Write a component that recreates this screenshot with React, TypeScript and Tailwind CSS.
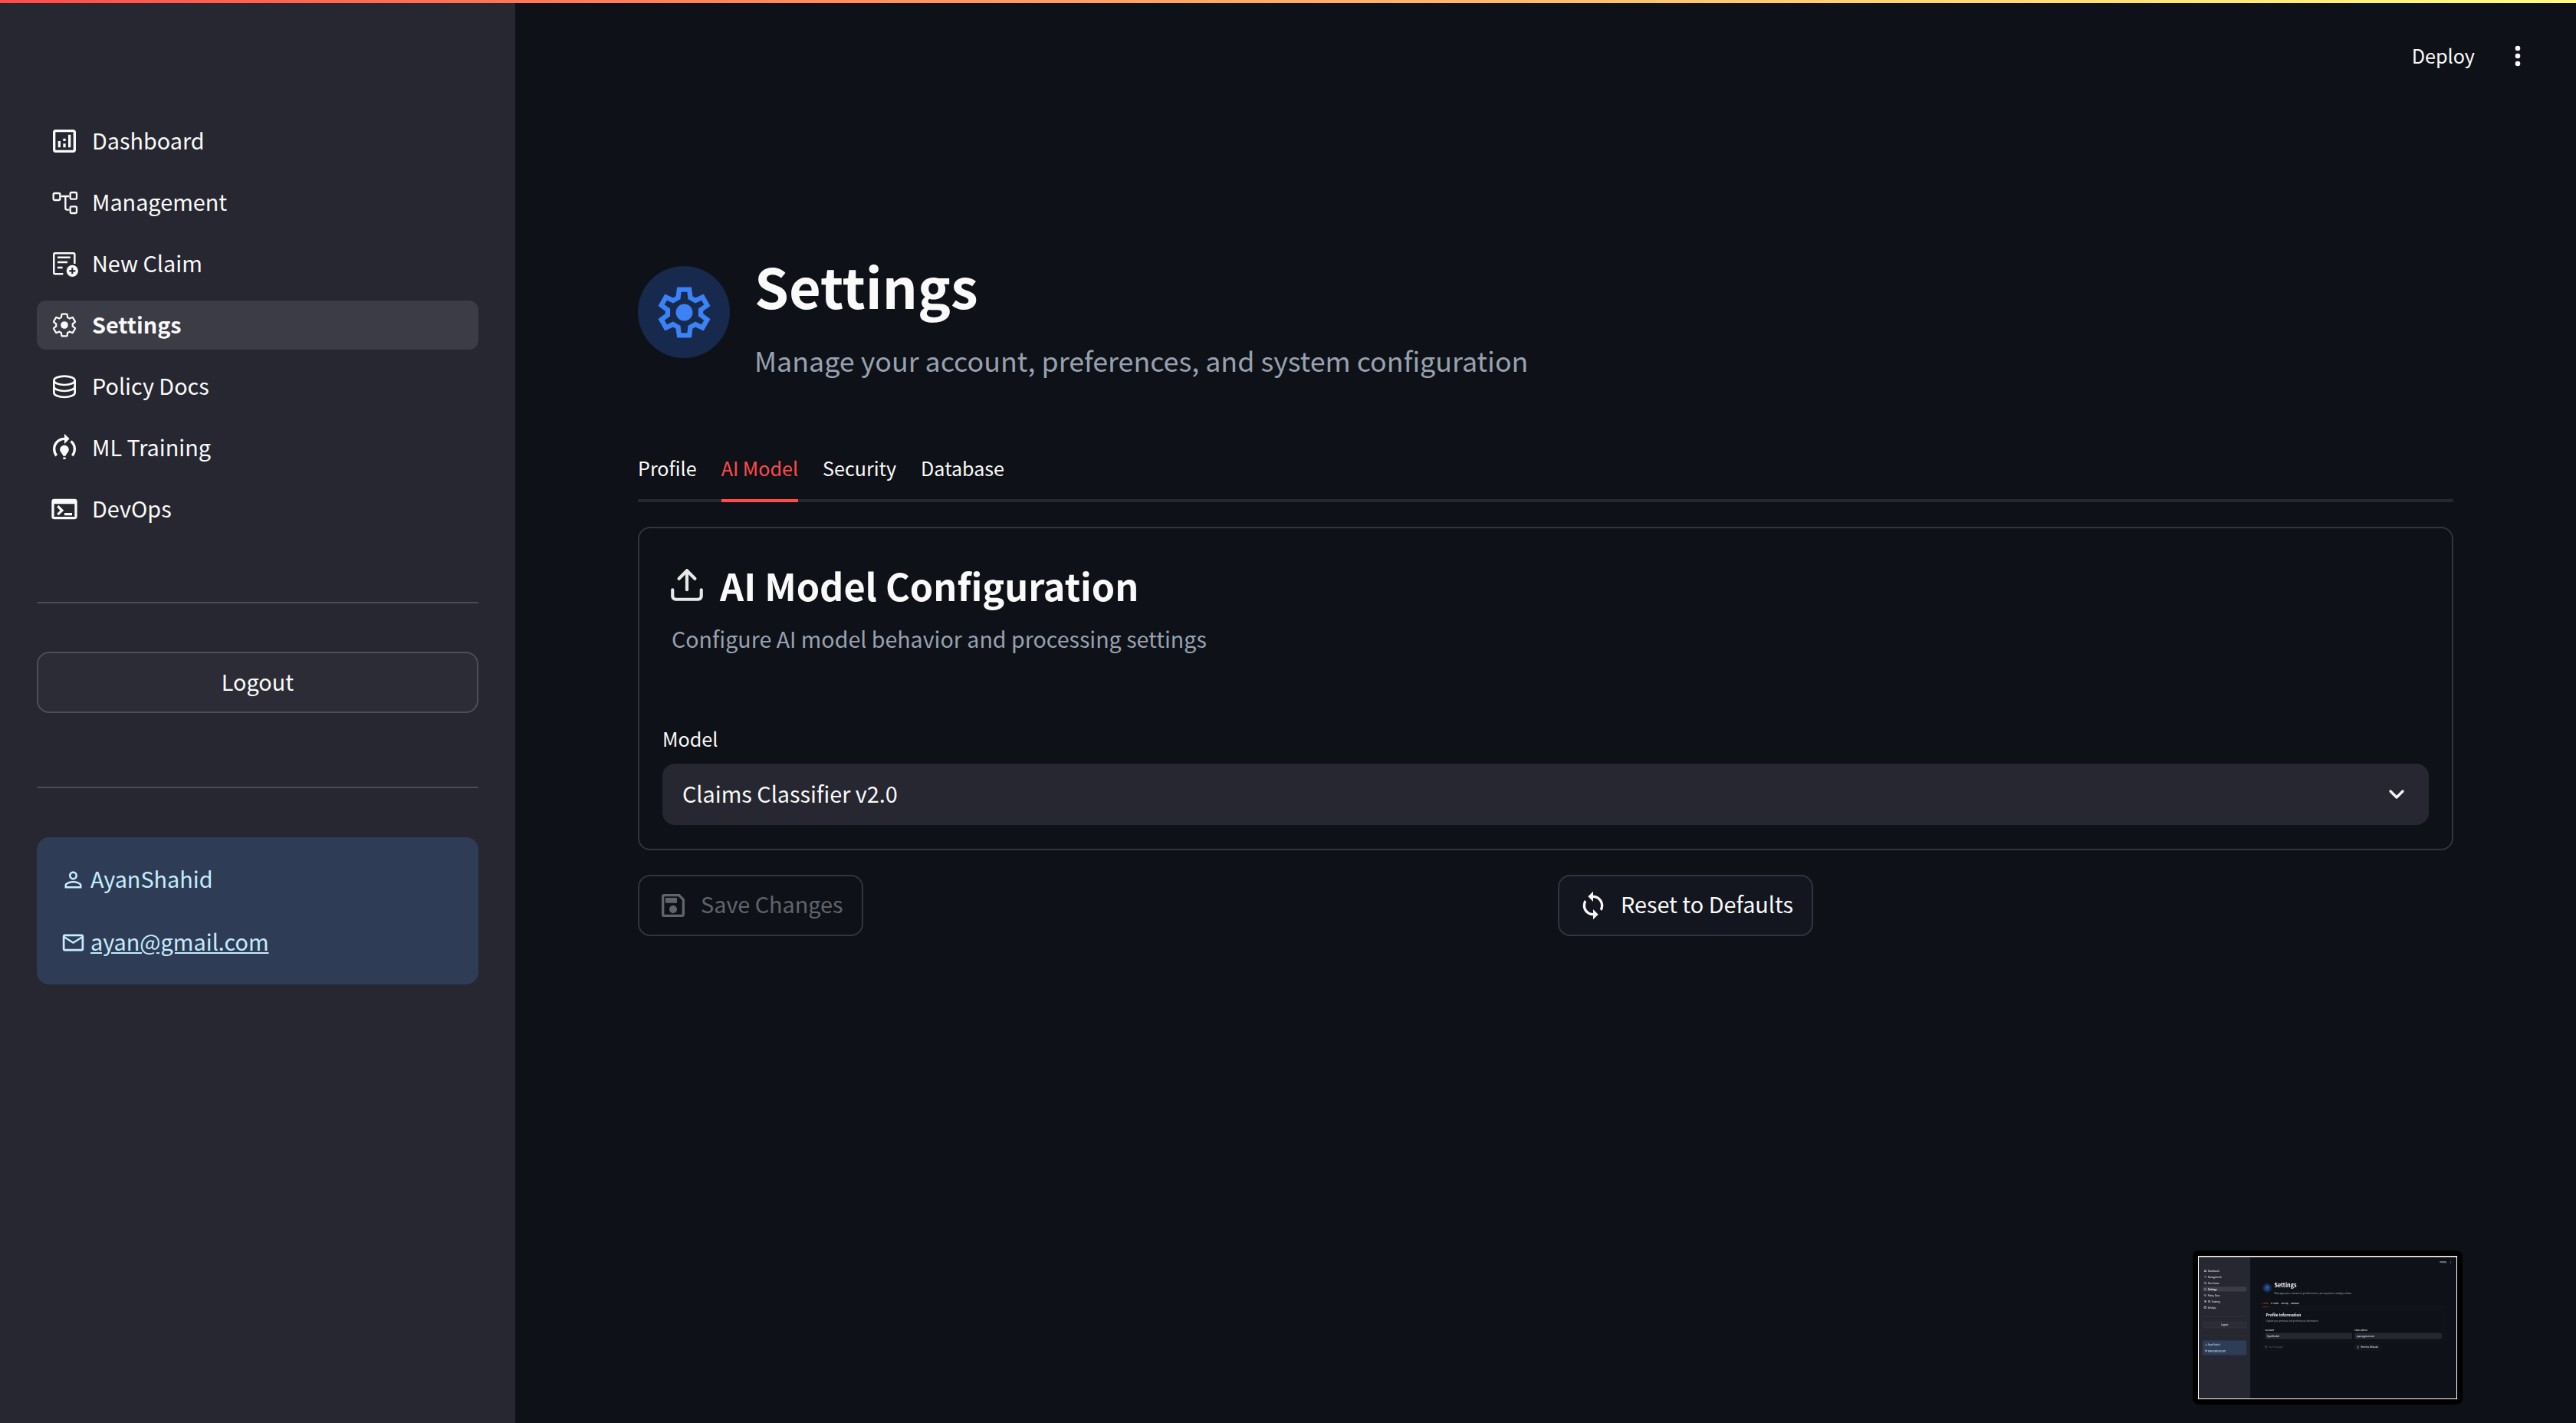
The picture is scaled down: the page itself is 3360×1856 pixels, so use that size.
import {
  MdOutlineAnalytics,
  MdOutlineMailOutline,
  MdOutlineModelTraining,
  MdOutlinePersonOutline,
  MdOutlineSave,
  MdOutlineTerminal,
  MdSync,
} from 'react-icons/md';
import { ChevronDown, Upload } from 'lucide-react';
import type { ReactNode } from 'react';

const GEAR =
  'M19.14 12.94c.04-.3.06-.61.06-.94 0-.32-.02-.64-.07-.94l2.03-1.58c.18-.14.23-.41.12-.61l-1.92-3.32c-.12-.22-.37-.29-.59-.22l-2.39.96c-.5-.38-1.03-.7-1.62-.94l-.36-2.54c-.04-.24-.24-.41-.48-.41h-3.84c-.24 0-.43.17-.47.41l-.36 2.54c-.59.24-1.13.57-1.62.94l-2.39-.96c-.22-.08-.47 0-.59.22L2.74 8.87c-.12.21-.08.47.12.61l2.03 1.58c-.05.3-.09.63-.09.94s.02.64.07.94l-2.03 1.58c-.18.14-.23.41-.12.61l1.92 3.32c.12.22.37.29.59.22l2.39-.96c.5.38 1.03.7 1.62.94l.36 2.54c.05.24.24.41.48.41h3.84c.24 0 .44-.17.47-.41l.36-2.54c.59-.24 1.13-.56 1.62-.94l2.39.96c.22.08.47 0 .59-.22l1.92-3.32c.12-.22.07-.47-.12-.61l-2.01-1.58z';

const NavGearIcon = () => (
  <svg viewBox="0 0 24 24" className="w-10 h-10" fill="none" stroke="currentColor" strokeWidth="1.5">
    <path d={GEAR} transform="translate(1.2 1.2) scale(0.9)" />
    <circle cx="12" cy="12" r="2.9" fill="currentColor" stroke="none" />
  </svg>
);

const HeaderGearIcon = () => (
  <svg viewBox="-110 -110 220 220" className="w-[73px] h-[73px]" fill="none" stroke="currentColor">
    <path
      strokeWidth="19"
      d="M-20 -90 L20 -90 L24 -58 L44 -47 L72 -60 L90 -28 L65 -10 L65 10 L90 28 L72 60 L44 47 L24 58 L20 90 L-20 90 L-24 58 L-44 47 L-72 60 L-90 28 L-65 10 L-65 -10 L-90 -28 L-72 -60 L-44 -47 L-24 -58 Z"
    />
    <circle cx="0" cy="0" r="33" fill="currentColor" stroke="none" />
  </svg>
);

const TreeIcon = () => (
  <svg viewBox="20 265 105 93" className="w-[35px] h-[31px]" fill="none" stroke="currentColor" strokeWidth="7">
    <rect x="28" y="274" width="26" height="27" rx="5" />
    <rect x="94" y="271" width="25" height="26" rx="5" />
    <rect x="94" y="326" width="25" height="26" rx="5" />
    <path d="M58 286H90M75 286V332Q75 339 82 339H90" />
  </svg>
);

const NewClaimIcon = () => (
  <svg viewBox="0 0 24 24" className="w-10 h-10" fill="none" stroke="currentColor" strokeWidth="1.5">
    <path d="M11 20H4.5A1 1 0 0 1 3.75 19V4.75A1 1 0 0 1 4.75 3.75H19A1 1 0 0 1 20 4.75V12" />
    <path d="M6.6 7H16.6M6.6 10.8H14.4M6.6 15H10.6" />
    <circle cx="18.2" cy="17.6" r="5" fill="currentColor" stroke="#262730" strokeWidth="0.8" />
    <path d="M18.2 15.2v4.8M15.8 17.6h4.8" stroke="#262730" strokeWidth="1.3" />
  </svg>
);

const DatabaseIcon = () => (
  <svg viewBox="0 0 24 24" className="w-10 h-10" fill="none" stroke="currentColor" strokeWidth="1.6">
    <ellipse cx="12" cy="7.4" rx="8.2" ry="3.4" />
    <path d="M3.8 7.4V17c0 1.9 3.7 3.4 8.2 3.4s8.2-1.5 8.2-3.4V7.4" />
    <path d="M3.8 12.2c0 1.9 3.7 3.4 8.2 3.4s8.2-1.5 8.2-3.4" />
  </svg>
);

const navItems = [
  { label: 'Dashboard', icon: <MdOutlineAnalytics className="w-10 h-10" /> },
  { label: 'Management', icon: <TreeIcon /> },
  { label: 'New Claim', icon: <NewClaimIcon /> },
  { label: 'Settings', icon: <NavGearIcon />, active: true },
  { label: 'Policy Docs', icon: <DatabaseIcon /> },
  { label: 'ML Training', icon: <MdOutlineModelTraining className="w-10 h-10" /> },
  { label: 'DevOps', icon: <MdOutlineTerminal className="w-10 h-10" /> },
];

const Divider = () => <div className="h-0.5 bg-[#4a4b54]" />;

const Sidebar = () => (
  <aside className="w-[672px] shrink-0 h-full bg-[#262730] px-12 pt-[152px] flex flex-col">
    <nav className="flex flex-col gap-4">
      {navItems.map((item) => (
        <div
          key={item.label}
          className={`h-16 rounded-xl px-4 flex items-center gap-4 text-[28.8px] text-[#fafafa] ${
            item.active ? 'bg-[#3b3c46] font-semibold' : ''
          }`}
        >
          <span className="w-10 h-10 flex items-center justify-center">{item.icon}</span>
          <span className="pb-0.5">{item.label}</span>
        </div>
      ))}
    </nav>
    <div className="mt-[89px]">
      <Divider />
    </div>
    <button className="mt-[63px] h-20 pb-0.5 rounded-2xl border-2 border-[#4d4e57] bg-[#2b2c35] text-[28.8px] text-[#fafafa]">
      Logout
    </button>
    <div className="mt-24">
      <Divider />
    </div>
    <div className="mt-16 h-48 rounded-2xl bg-[#2e3d55] px-[31px] flex flex-col justify-center gap-10 text-[28.8px] leading-10 text-[#c7ebff]">
      <div className="flex items-center gap-1.5">
        <MdOutlinePersonOutline className="w-[33px] h-[33px]" />
        <span className="pb-0.5">AyanShahid</span>
      </div>
      <div className="flex items-center gap-1.5">
        <MdOutlineMailOutline className="w-[33px] h-[33px]" />
        <span className="pb-0.5 underline">ayan@gmail.com</span>
      </div>
    </div>
  </aside>
);

const tabs = ['Profile', 'AI Model', 'Security', 'Database'];

const Tabs = ({ active }: { active: string }) => (
  <div className="mt-[95px] flex gap-8 border-b-4 border-[#262730] text-[25.1px] leading-[38px]">
    {tabs.map((tab) => (
      <div
        key={tab}
        className={`-mb-1 pb-[22px] border-b-4 ${
          tab === active ? 'border-[#ff4b4b] text-[#ff4b4b]' : 'border-transparent text-[#fafafa]'
        }`}
      >
        {tab}
      </div>
    ))}
  </div>
);

const Field = ({ label, children }: { label: string; children: ReactNode }) => (
  <div className="flex-1">
    <div className="text-[25.2px] leading-[38px] pb-0.5 text-[#fafafa]">{label}</div>
    <div className="mt-3 h-20 rounded-2xl bg-[#262730] pl-[26px] pr-[26px] flex items-center justify-between text-[28.8px] text-[#fafafa]">
      {children}
    </div>
  </div>
);

const Card = ({ icon, title, description, children }: { icon?: ReactNode; title: string; description: string; children: ReactNode }) => (
  <div className="h-[422px] mt-8 rounded-2xl border-2 border-[#33353c] px-[30px] pt-[38px]">
    <div className="px-3 flex items-center gap-[18px] text-[48.6px] leading-[72px] font-semibold text-[#fafafa]">
      {icon}
      <span>{title}</span>
    </div>
    <div className="px-3 mt-[14px] text-[28.6px] leading-10 text-[#98a1b0]">{description}</div>
    <div className="mt-[91px] flex gap-8">{children}</div>
  </div>
);

const ActionButton = ({ icon, children, muted }: { icon: ReactNode; children: ReactNode; muted?: boolean }) => (
  <button
    className={`h-20 px-6 rounded-2xl border-2 border-[#33353c] flex items-center gap-4 text-[28.8px] ${
      muted ? 'text-[#61646b]' : 'bg-[#13161f] text-[#fafafa]'
    }`}
  >
    {icon}
    <span className="pb-1">{children}</span>
  </button>
);

const Screen = ({ tab }: { tab: string }) => (
  <div className="w-[3360px] h-[1856px] flex bg-[#0e1117] font-['Noto_Sans_CJK_SC','Noto_Sans',sans-serif] overflow-hidden">
    <Sidebar />
    <main className="flex-1 relative">
      <div className="absolute right-[72px] top-[52px] flex items-center gap-[52px] text-[25.2px] leading-10 text-[#fafafa]">
        <span className="pb-0.5">Deploy</span>
        <svg viewBox="0 0 8 32" className="w-2 h-8" fill="currentColor">
          <circle cx="4" cy="6" r="3.3" />
          <circle cx="4" cy="16" r="3.3" />
          <circle cx="4" cy="26" r="3.3" />
        </svg>
      </div>
      <div className="mx-40 pt-[327px]">
        <div className="flex gap-8">
          <div className="mt-5 w-[120px] h-[120px] rounded-full bg-[#172a4d] flex items-center justify-center text-[#3b82f6]">
            <HeaderGearIcon />
          </div>
          <div>
            <h1 className="text-[72px] leading-[90px] font-bold text-[#fafafa]">Settings</h1>
            <p className="mt-[26px] pb-px text-[35.8px] leading-[52px] text-[#98a1b0]">
              Manage your account, preferences, and system configuration
            </p>
          </div>
        </div>
        <Tabs active={tab} />
        {tab === 'Profile' ? (
          <Card title="Profile Information" description="Update your personal and professional information">
            <Field label="Full Name">AyanShahid</Field>
            <Field label="Email Address">ayan@gmail.com</Field>
          </Card>
        ) : (
          <Card
            icon={<Upload className="w-[50px] h-[50px] -ml-[5px] text-[#e8e8e8]" strokeWidth={2} />}
            title="AI Model Configuration"
            description="Configure AI model behavior and processing settings"
          >
            <Field label="Model">
              <span className="pb-0.5">Claims Classifier v2.0</span>
              <ChevronDown className="w-8 h-8" strokeWidth={2.5} />
            </Field>
          </Card>
        )}
        <div className="mt-8 flex gap-8">
          <div className="flex-1">
            <div className="inline-flex">
              <ActionButton muted icon={<MdOutlineSave className="w-10 h-10" />}>
                Save Changes
              </ActionButton>
            </div>
          </div>
          <div className="flex-1">
            <div className="inline-flex">
              <ActionButton icon={<MdSync className="w-10 h-10" />}>Reset to Defaults</ActionButton>
            </div>
          </div>
        </div>
      </div>
    </main>
  </div>
);

export default function App() {
  return (
    <div className="relative w-[3360px] h-[1856px] overflow-hidden">
      <Screen tab="AI Model" />
      <div className="absolute top-0 inset-x-0 h-1 bg-gradient-to-r from-[#ff4b4b] to-[#fffd80]" />
      <div className="absolute left-[2860px] top-[1631px] w-[352px] h-[201px] rounded-lg bg-black p-2">
        <div className="relative w-[336px] h-[185px] overflow-hidden outline outline-white bg-[#0e1117]">
          <div className="origin-top-left scale-[0.1] blur-[3px]">
            <Screen tab="Profile" />
          </div>
          <div className="absolute top-0 inset-x-0 h-px bg-[#8a8a8a]" />
        </div>
      </div>
    </div>
  );
}
